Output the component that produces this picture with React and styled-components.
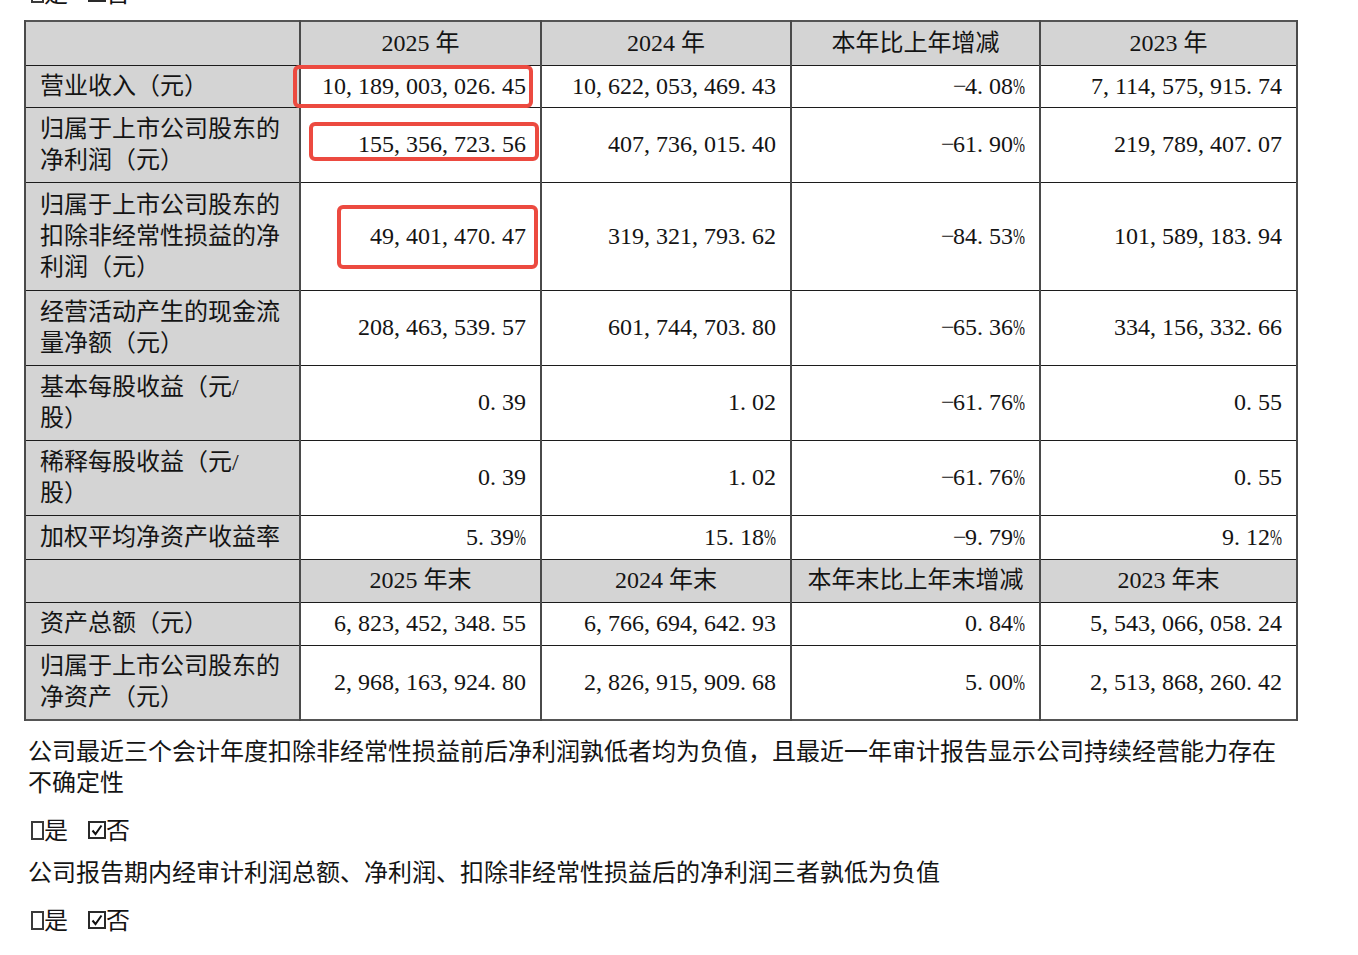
import React from "react";
import styled, { createGlobalStyle } from "styled-components";

const Global = createGlobalStyle`
  html, body { margin: 0; padding: 0; background: #fff; }
  body {
    font-family: "Liberation Serif", "Noto Sans CJK SC", serif;
    color: #141414;
    font-size: 24px;
  }
`;

const Page = styled.div`
  display: flex;
  flex-direction: column;
  padding-left: 24px;
  width: 1273px;
`;

const TopLine = styled.div`
  margin-top: -24px;
  margin-bottom: 13px;
`;

const Table = styled.table`
  border-collapse: collapse;
  table-layout: fixed;
  width: 1272px;
  border: 2px solid #555;
`;

const HeadRow = styled.tr`
  height: ${(p) => p.$h}px;
  background: #d4d4d4;
`;

const Row = styled.tr`
  height: ${(p) => p.$h}px;
`;

const Cell = styled.td`
  position: relative;
  padding: 0 14px;
  border-top: 1px solid #1c1c1c;
  border-bottom: 1px solid #1c1c1c;
  border-left: 2px solid #4a4a4a;
  border-right: 2px solid #4a4a4a;
  vertical-align: middle;
  line-height: 31px;
  white-space: nowrap;
`;

const LabelCell = styled(Cell)`
  background: #d4d4d4;
  text-align: left;
`;

const HeadCell = styled(Cell)`
  text-align: center;
`;

const NumCell = styled(Cell)`
  text-align: right;
`;

const Highlight = styled.span`
  position: absolute;
  box-sizing: border-box;
  left: ${(p) => p.$left}px;
  top: ${(p) => p.$top}px;
  width: ${(p) => p.$w}px;
  height: ${(p) => p.$h}px;
  border: 4px solid #ec4a40;
  border-radius: 6px;
  pointer-events: none;
  z-index: 2;
`;

const Half = styled.span`
  display: inline-block;
  width: 0.5em;
  text-align: ${(p) => p.$align};
  white-space: nowrap;
`;

const Squeeze = styled.span`
  display: inline-block;
  transform: scaleX(0.6);
  transform-origin: left center;
`;

const Para = styled.p`
  margin: 0;
  padding-left: 4px;
  line-height: 31px;
  width: 1269px;
`;

const Notes = styled.div`
  display: flex;
  flex-direction: column;
  gap: 14px;
  margin-top: 16px;
`;

const CheckLine = styled.div`
  display: flex;
  align-items: center;
  height: 31px;
  padding-left: 7px;
`;

const EmptyBox = styled.span`
  display: inline-block;
  flex: none;
  box-sizing: border-box;
  width: 13px;
  height: 19px;
  border: 2px solid #3a3a3a;
  margin-top: 4px;
`;

const TickBox = styled.span`
  display: inline-flex;
  flex: none;
  align-items: center;
  justify-content: center;
  box-sizing: border-box;
  width: 18px;
  height: 18px;
  border: 2px solid #2a2a2a;
  margin-left: 20px;
  margin-top: 3px;
`;

const Word = styled.span`
  display: inline-block;
`;

function Num({ value }) {
  const parts = value.split(/([^0-9 ])/).filter((s) => s !== "");
  return (
    <>
      {parts.map((p, i) => {
        if (p === "," || p === ".")
          return (
            <Half key={i} $align="left">
              {p}
            </Half>
          );
        if (p === "-")
          return (
            <Half key={i} $align="center">
              −
            </Half>
          );
        if (p === "%")
          return (
            <Half key={i} $align="left">
              <Squeeze>%</Squeeze>
            </Half>
          );
        return <React.Fragment key={i}>{p}</React.Fragment>;
      })}
    </>
  );
}

function Checks() {
  return (
    <>
      <EmptyBox />
      <Word>是</Word>
      <TickBox>
        <svg width="12" height="12" viewBox="0 0 12 12">
          <polyline
            points="1.5,6.5 4.5,10 10.5,1.5"
            fill="none"
            stroke="#111"
            strokeWidth="2"
          />
        </svg>
      </TickBox>
      <Word>否</Word>
    </>
  );
}

const rowsA = [
  {
    h: 42,
    label: ["营业收入（元）"],
    vals: ["10,189,003,026.45", "10,622,053,469.43", "-4.08%", "7,114,575,915.74"],
    hl: { left: -8, top: -1, w: 240, h: 43 },
  },
  {
    h: 75,
    label: ["归属于上市公司股东的", "净利润（元）"],
    vals: ["155,356,723.56", "407,736,015.40", "-61.90%", "219,789,407.07"],
    hl: { left: 8, top: 14, w: 230, h: 39 },
  },
  {
    h: 108,
    label: ["归属于上市公司股东的", "扣除非经常性损益的净", "利润（元）"],
    vals: ["49,401,470.47", "319,321,793.62", "-84.53%", "101,589,183.94"],
    hl: { left: 36, top: 22, w: 201, h: 64 },
  },
  {
    h: 75,
    label: ["经营活动产生的现金流", "量净额（元）"],
    vals: ["208,463,539.57", "601,744,703.80", "-65.36%", "334,156,332.66"],
  },
  {
    h: 75,
    label: ["基本每股收益（元/", "股）"],
    vals: ["0.39", "1.02", "-61.76%", "0.55"],
  },
  {
    h: 75,
    label: ["稀释每股收益（元/", "股）"],
    vals: ["0.39", "1.02", "-61.76%", "0.55"],
  },
  {
    h: 44,
    label: ["加权平均净资产收益率"],
    vals: ["5.39%", "15.18%", "-9.79%", "9.12%"],
  },
];

const rowsB = [
  {
    h: 43,
    label: ["资产总额（元）"],
    vals: ["6,823,452,348.55", "6,766,694,642.93", "0.84%", "5,543,066,058.24"],
  },
  {
    h: 75,
    label: ["归属于上市公司股东的", "净资产（元）"],
    vals: ["2,968,163,924.80", "2,826,915,909.68", "5.00%", "2,513,868,260.42"],
  },
];

function DataRow({ row }) {
  return (
    <Row $h={row.h}>
      <LabelCell>
        {row.label.map((l, i) => (
          <React.Fragment key={i}>
            {i > 0 && <br />}
            {l}
          </React.Fragment>
        ))}
      </LabelCell>
      {row.vals.map((v, i) => (
        <NumCell key={i}>
          {i === 0 && row.hl && (
            <Highlight
              $left={row.hl.left}
              $top={row.hl.top}
              $w={row.hl.w}
              $h={row.hl.h}
            />
          )}
          <Num value={v} />
        </NumCell>
      ))}
    </Row>
  );
}

export default function App() {
  return (
    <>
      <Global />
      <Page>
        <TopLine>
          <CheckLine>
            <Checks />
          </CheckLine>
        </TopLine>
        <Table>
          <colgroup>
            <col style={{ width: 275 }} />
            <col style={{ width: 241 }} />
            <col style={{ width: 250 }} />
            <col style={{ width: 249 }} />
            <col style={{ width: 257 }} />
          </colgroup>
          <tbody>
            <HeadRow $h={44}>
              <HeadCell />
              <HeadCell>2025 年</HeadCell>
              <HeadCell>2024 年</HeadCell>
              <HeadCell>本年比上年增减</HeadCell>
              <HeadCell>2023 年</HeadCell>
            </HeadRow>
            {rowsA.map((r, i) => (
              <DataRow key={i} row={r} />
            ))}
            <HeadRow $h={43}>
              <HeadCell />
              <HeadCell>2025 年末</HeadCell>
              <HeadCell>2024 年末</HeadCell>
              <HeadCell>本年末比上年末增减</HeadCell>
              <HeadCell>2023 年末</HeadCell>
            </HeadRow>
            {rowsB.map((r, i) => (
              <DataRow key={i} row={r} />
            ))}
          </tbody>
        </Table>
        <Notes>
          <Para>
            公司最近三个会计年度扣除非经常性损益前后净利润孰低者均为负值，且最近一年审计报告显示公司持续经营能力存在不确定性
          </Para>
          <CheckLine>
            <Checks />
          </CheckLine>
          <Para>
            公司报告期内经审计利润总额、净利润、扣除非经常性损益后的净利润三者孰低为负值
          </Para>
          <CheckLine>
            <Checks />
          </CheckLine>
        </Notes>
      </Page>
    </>
  );
}
